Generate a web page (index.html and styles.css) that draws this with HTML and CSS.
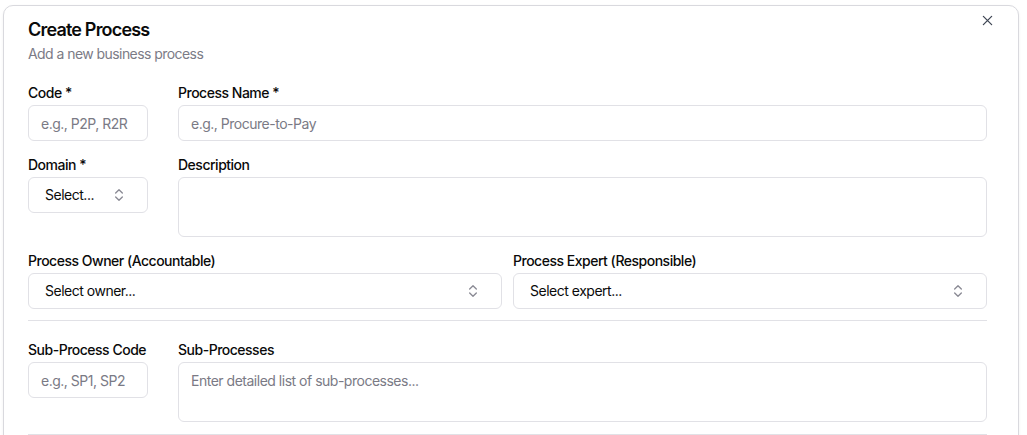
FILE: index.html
```html
<!DOCTYPE html>
<html lang="en">
<head>
<meta charset="utf-8">
<title>Create Process</title>
<link rel="stylesheet" href="styles.css">
</head>
<body>
<div class="dialog" role="dialog" aria-labelledby="dlg-title">
  <button class="close" type="button" aria-label="Close">
    <svg viewBox="0 0 12 12" width="12" height="12"><path d="M1.5 1.5l9 9M10.5 1.5l-9 9"/></svg>
  </button>

  <header class="dialog-head">
    <h2 id="dlg-title" class="title">Create Process</h2>
    <p class="subtitle">Add a new business process</p>
  </header>

  <form class="form">
    <div class="row row-code">
      <div class="field">
        <label class="label">Code *</label>
        <input class="input" placeholder="e.g., P2P, R2R">
      </div>
      <div class="field">
        <label class="label">Process Name *</label>
        <input class="input" placeholder="e.g., Procure-to-Pay">
      </div>
    </div>

    <div class="row row-code">
      <div class="field">
        <label class="label">Domain *</label>
        <button class="select" type="button">
          <span>Select...</span>
          <svg class="chev" viewBox="0 0 24 24"><path d="m7 15 5 5 5-5M7 9l5-5 5 5"/></svg>
        </button>
      </div>
      <div class="field">
        <label class="label">Description</label>
        <textarea class="textarea"></textarea>
      </div>
    </div>

    <div class="row row-half">
      <div class="field">
        <label class="label">Process Owner (Accountable)</label>
        <button class="select" type="button">
          <span>Select owner...</span>
          <svg class="chev" viewBox="0 0 24 24"><path d="m7 15 5 5 5-5M7 9l5-5 5 5"/></svg>
        </button>
      </div>
      <div class="field">
        <label class="label">Process Expert (Responsible)</label>
        <button class="select" type="button">
          <span>Select expert...</span>
          <svg class="chev" viewBox="0 0 24 24"><path d="m7 15 5 5 5-5M7 9l5-5 5 5"/></svg>
        </button>
      </div>
    </div>

    <hr class="sep">

    <div class="row row-code">
      <div class="field">
        <label class="label">Sub-Process Code</label>
        <input class="input" placeholder="e.g., SP1, SP2">
      </div>
      <div class="field">
        <label class="label">Sub-Processes</label>
        <textarea class="textarea" placeholder="Enter detailed list of sub-processes..."></textarea>
      </div>
    </div>

    <hr class="sep sep-end">
  </form>
</div>
</body>
</html>
```

FILE: styles.css
```css
* { box-sizing: border-box; }

html, body {
  margin: 0;
  height: 100%;
  overflow: hidden;
  background: #ffffff;
}

body {
  font-family: Inter, "Noto Sans", sans-serif;
  color: #0a0a0a;
  padding: 5px 8px 0 3px;
}

.dialog {
  position: relative;
  border: 1px solid #d9d9de;
  border-radius: 10px;
  background: #fff;
  padding: 10px 31px 80px 24px;
  box-shadow: 0 1px 3px rgba(0, 0, 0, 0.06);
}

.close {
  position: absolute;
  top: 6px;
  right: 23px;
  width: 16px;
  height: 16px;
  padding: 2px;
  border: 0;
  background: none;
  display: flex;
  align-items: center;
  justify-content: center;
}
.close svg {
  width: 11px;
  height: 11px;
  fill: none;
  stroke: #3f4654;
  stroke-width: 1.4;
  stroke-linecap: round;
}

.dialog-head { margin-bottom: 19px; }

.title {
  margin: 0;
  font-size: 18px;
  line-height: 28px;
  font-weight: 600;
  letter-spacing: -0.045em;
}

.subtitle {
  margin: 0;
  font-size: 14px;
  line-height: 20px;
  color: #7b7b86;
  letter-spacing: -0.04em;
}

.form {
  display: flex;
  flex-direction: column;
  gap: 14px;
}

.row {
  display: grid;
  column-gap: 30px;
}
.row-code { grid-template-columns: 120px 1fr; }
.row-half { grid-template-columns: 1fr 1fr; column-gap: 11px; }

.field {
  display: flex;
  flex-direction: column;
  gap: 2px;
  min-width: 0;
}

.label {
  font-size: 14px;
  line-height: 20px;
  font-weight: 500;
  letter-spacing: -0.035em;
  white-space: nowrap;
}

.input, .textarea, .select {
  width: 100%;
  border: 1px solid #e1e1e6;
  border-radius: 6px;
  background: #fff;
  font-family: inherit;
  font-size: 14px;
  color: #0a0a0a;
  letter-spacing: -0.035em;
}

.input {
  height: 36px;
  padding: 0 12px;
}

.textarea {
  height: 60px;
  padding: 8px 12px;
  resize: none;
  line-height: 20px;
  display: block;
}

.input::placeholder, .textarea::placeholder { color: #7a7a85; }

.select {
  height: 36px;
  padding: 0 20px 1px 16px;
  display: flex;
  align-items: center;
  justify-content: space-between;
  text-align: left;
}

.chev {
  width: 16px;
  height: 16px;
  flex: none;
  fill: none;
  stroke: #8a8a94;
  stroke-width: 2;
  stroke-linecap: round;
  stroke-linejoin: round;
}

.sep {
  margin: -3px 0 5px;
  border: 0;
  height: 1px;
  background: #e1e1e6;
}
.sep-end { margin-top: -2px; }
```
